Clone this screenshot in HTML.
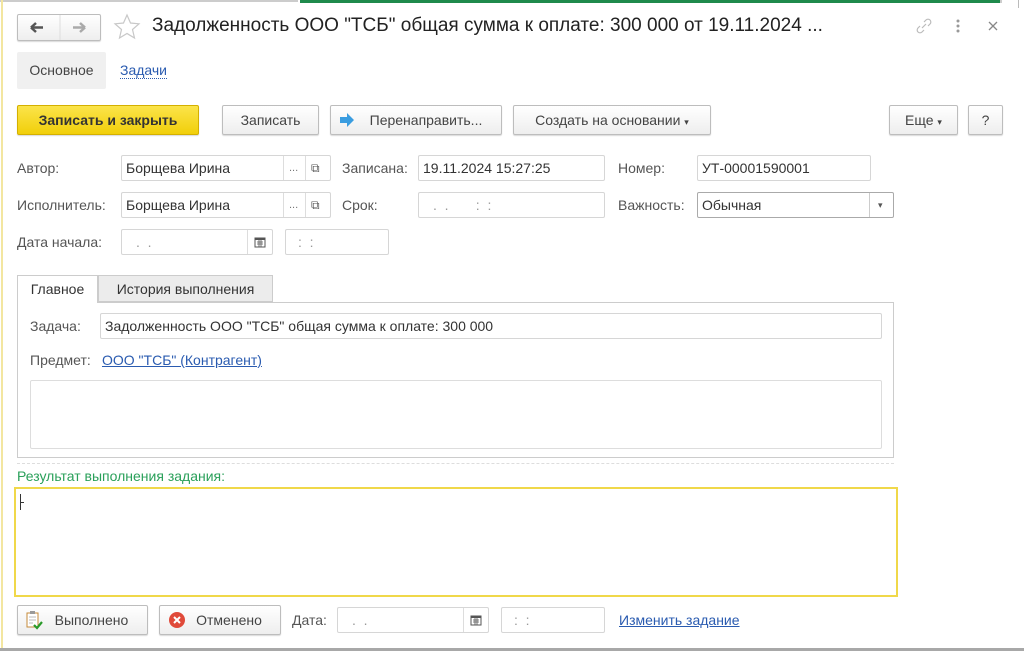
<!DOCTYPE html>
<html><head><meta charset="utf-8"><style>
*{box-sizing:border-box;margin:0;padding:0}
body{width:1024px;height:651px;background:#fff;position:relative;overflow:hidden;font-family:"Liberation Sans",sans-serif;font-size:14px;color:#333}
.a{position:absolute}
.btn{position:absolute;border:1px solid #bdbdbd;border-radius:2px;background:linear-gradient(#fff,#eee);box-shadow:0 1px 1px rgba(0,0,0,.15);color:#444;font-size:14px;text-align:center;line-height:28px;height:30px}
.fld{position:absolute;border:1px solid #d6d6d6;border-radius:2px;background:#fff;height:26px;line-height:24px;padding-left:4px;color:#333;font-size:14px}
.lbl{position:absolute;color:#555;font-size:14px}
.sep{position:absolute;top:0;bottom:0;border-left:1px solid #ddd}
.link{color:#2a5bb0;text-decoration:underline}
</style></head><body>
<div class="a" style="left:0;top:0;width:298px;height:2px;background:#ccc"></div>
<div class="a" style="left:300px;top:0;width:700px;height:3px;background:#1f8a4c"></div>
<div class="a" style="left:1000px;top:0;width:2px;height:3px;background:#ccc"></div>
<div class="a" style="left:1018px;top:0;width:1px;height:8px;background:#bbb"></div>
<div class="a" style="left:1px;top:0;width:2px;height:651px;background:#f3e6a0"></div>
<div class="a" style="left:0;top:648px;width:1024px;height:3px;background:#a8a8a8"></div>

<div class="btn" style="left:17px;top:14px;width:84px;height:27px"></div>
<svg class="a" style="left:17px;top:14px" width="84" height="27"><line x1="43" y1="1" x2="43" y2="26" stroke="#ddd"/>
<path d="M14 13.5h12M14 13.5l5-4.5M14 13.5l5 4.5" stroke="#555" stroke-width="2.5" fill="none"/>
<path d="M56 13.5h12M68 13.5l-5-4.5M68 13.5l-5 4.5" stroke="#aaa" stroke-width="2.5" fill="none"/></svg>
<svg class="a" style="left:113px;top:13px" width="28" height="28"><path d="M14 2l3.5 8 8.5.8-6.5 5.7 2 8.5L14 20.5 6.5 25l2-8.5L2 10.8l8.5-.8z" fill="none" stroke="#c8c8c8" stroke-width="1.2"/></svg>
<div class="a" style="left:152px;top:15px;font-size:19px;color:#222;white-space:nowrap">Задолженность ООО "ТСБ" общая сумма к оплате: 300 000 от 19.11.2024 ...</div>
<svg class="a" style="left:914px;top:16px" width="20" height="20"><path d="M8 12l4-4M6 10l-2 2a2.5 2.5 0 0 0 4 4l2-2M14 10l2-2a2.5 2.5 0 0 0-4-4l-2 2" stroke="#bbb" stroke-width="1.2" fill="none"/></svg>
<svg class="a" style="left:955px;top:18px" width="6" height="16"><circle cx="3" cy="3" r="1.5" fill="#999"/><circle cx="3" cy="8" r="1.5" fill="#999"/><circle cx="3" cy="13" r="1.5" fill="#999"/></svg>
<svg class="a" style="left:988px;top:21px" width="10" height="10"><path d="M1 1l8 8M9 1l-8 8" stroke="#888" stroke-width="1.3"/></svg>

<div class="a" style="left:17px;top:52px;width:89px;height:37px;background:#f0f0f0;border-radius:2px;line-height:37px;text-align:center;color:#444">Основное</div>
<div class="a" style="left:120px;top:63px;color:#2a5bb0;border-bottom:1px dotted #2a5bb0;line-height:15px">Задачи</div>

<div class="btn" style="left:17px;top:105px;width:182px;background:linear-gradient(#fbe44a,#f1cf0a);border-color:#d4b000;font-weight:bold;color:#333">Записать и закрыть</div>
<div class="btn" style="left:222px;top:105px;width:97px">Записать</div>
<div class="btn" style="left:330px;top:105px;width:172px;padding-left:20px">Перенаправить...</div>
<svg class="a" style="left:339px;top:112px" width="16" height="16"><path d="M1 5h7V1l7 7-7 7v-4H1z" fill="#3a9de0"/></svg>
<div class="btn" style="left:513px;top:105px;width:198px">Создать на основании <span style="font-size:9px">▾</span></div>
<div class="btn" style="left:889px;top:105px;width:69px">Еще <span style="font-size:9px">▾</span></div>
<div class="btn" style="left:968px;top:105px;width:35px">?</div>

<div class="lbl" style="left:17px;top:160px">Автор:</div>
<div class="fld" style="left:121px;top:155px;width:210px">Борщева Ирина<span class="sep" style="left:161px"></span><span class="a" style="left:167px;top:0;font-size:11px;color:#777">...</span><span class="sep" style="left:183px"></span><span class="a" style="left:189px;top:0;font-size:12px;color:#555">⧉</span></div>
<div class="lbl" style="left:342px;top:160px">Записана:</div>
<div class="fld" style="left:418px;top:155px;width:187px">19.11.2024 15:27:25</div>
<div class="lbl" style="left:618px;top:160px">Номер:</div>
<div class="fld" style="left:697px;top:155px;width:174px">УТ-00001590001</div>

<div class="lbl" style="left:17px;top:197px">Исполнитель:</div>
<div class="fld" style="left:121px;top:192px;width:210px">Борщева Ирина<span class="sep" style="left:161px"></span><span class="a" style="left:167px;top:0;font-size:11px;color:#777">...</span><span class="sep" style="left:183px"></span><span class="a" style="left:189px;top:0;font-size:12px;color:#555">⧉</span></div>
<div class="lbl" style="left:342px;top:197px">Срок:</div>
<div class="fld" style="left:418px;top:192px;width:187px;color:#999;padding-left:14px">.&nbsp;&nbsp;.&nbsp;&nbsp;&nbsp;&nbsp;&nbsp;&nbsp;&nbsp;:&nbsp;&nbsp;:</div>
<div class="lbl" style="left:618px;top:197px">Важность:</div>
<div class="fld" style="left:697px;top:192px;width:197px;border-color:#aaa">Обычная<span class="sep" style="left:171px;border-color:#ccc"></span><span class="a" style="left:180px;top:0;font-size:9px;color:#555">▾</span></div>

<div class="lbl" style="left:17px;top:234px">Дата начала:</div>
<div class="fld" style="left:121px;top:229px;width:152px;color:#999;padding-left:14px">.&nbsp;&nbsp;.<span class="sep" style="left:125px"></span></div>
<svg class="a" style="left:254px;top:236px" width="12" height="12"><rect x="1" y="2" width="10" height="9" fill="none" stroke="#555"/><rect x="1" y="2" width="10" height="2" fill="#555"/><path d="M3 6h6M3 8h6M5 4v7M7 4v7" stroke="#555" stroke-width=".8"/></svg>
<div class="fld" style="left:285px;top:229px;width:104px;color:#999;padding-left:12px">:&nbsp;&nbsp;:</div>

<div class="a" style="left:17px;top:275px;width:81px;height:28px;border:1px solid #ccc;border-bottom:none;background:#fff;line-height:27px;text-align:center;color:#333;z-index:2">Главное</div>
<div class="a" style="left:98px;top:275px;width:175px;height:27px;border:1px solid #ccc;background:#ececec;line-height:26px;text-align:center;color:#333">История выполнения</div>
<div class="a" style="left:17px;top:302px;width:877px;height:156px;border:1px solid #ccc"></div>
<div class="lbl" style="left:30px;top:318px">Задача:</div>
<div class="fld" style="left:100px;top:313px;width:782px">Задолженность ООО "ТСБ" общая сумма к оплате: 300 000</div>
<div class="lbl" style="left:30px;top:352px">Предмет:</div>
<div class="a link" style="left:102px;top:352px">ООО "ТСБ" (Контрагент)</div>
<div class="a" style="left:30px;top:380px;width:852px;height:69px;border:1px solid #ddd;border-radius:2px"></div>
<div class="a" style="left:17px;top:463px;width:877px;border-top:1px dashed #ddd"></div>
<div class="a" style="left:17px;top:468px;color:#2aa05a">Результат выполнения задания:</div>
<div class="a" style="left:14px;top:487px;width:884px;height:110px;border:2px solid #f0d84a"></div>
<div class="a" style="left:20px;top:494px;width:1px;height:16px;background:#333"></div>
<div class="a" style="left:20px;top:502px;width:4px;height:1px;background:#333"></div>

<div class="btn" style="left:17px;top:605px;width:131px;padding-left:18px">Выполнено</div>
<svg class="a" style="left:25px;top:610px" width="18" height="20"><rect x="2" y="3" width="11" height="14" fill="#fff" stroke="#c48a3a"/><rect x="5" y="1" width="5" height="3" fill="#999"/><path d="M4 7h7M4 10h7M4 13h4" stroke="#bbb"/><path d="M9 15l3 3 5-6" stroke="#2a9a2a" stroke-width="2.2" fill="none"/></svg>
<div class="btn" style="left:159px;top:605px;width:122px;padding-left:18px">Отменено</div>
<svg class="a" style="left:168px;top:611px" width="18" height="18"><circle cx="9" cy="9" r="8" fill="#e04a3a"/><path d="M6 6l6 6M12 6l-6 6" stroke="#fff" stroke-width="2"/></svg>
<div class="lbl" style="left:292px;top:612px">Дата:</div>
<div class="fld" style="left:337px;top:607px;width:152px;color:#999;padding-left:14px">.&nbsp;&nbsp;.<span class="sep" style="left:125px"></span></div>
<svg class="a" style="left:470px;top:614px" width="12" height="12"><rect x="1" y="2" width="10" height="9" fill="none" stroke="#555"/><rect x="1" y="2" width="10" height="2" fill="#555"/><path d="M3 6h6M3 8h6M5 4v7M7 4v7" stroke="#555" stroke-width=".8"/></svg>
<div class="fld" style="left:501px;top:607px;width:104px;color:#999;padding-left:12px">:&nbsp;&nbsp;:</div>
<div class="a link" style="left:619px;top:612px">Изменить задание</div>
</body></html>
